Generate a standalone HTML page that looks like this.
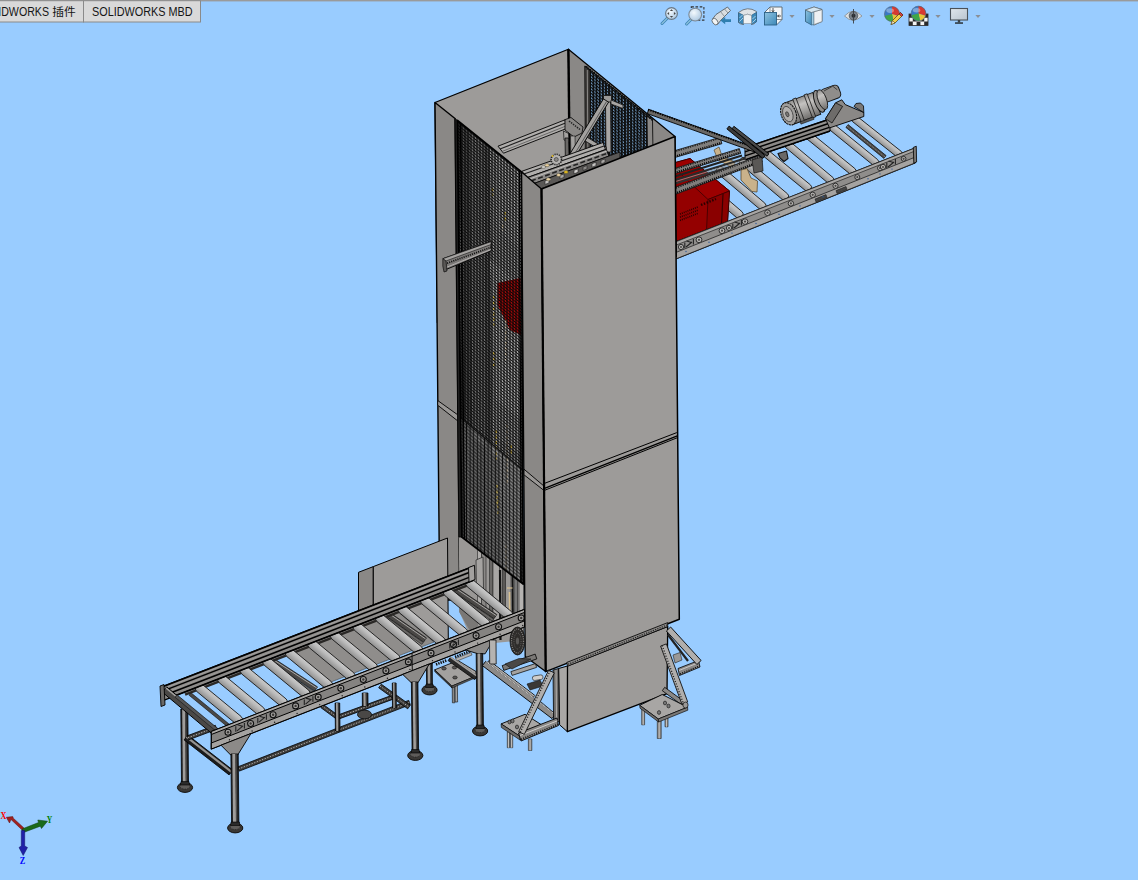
<!DOCTYPE html>
<html><head><meta charset="utf-8"><title>SOLIDWORKS</title>
<style>html,body{margin:0;padding:0;background:#99ccff;overflow:hidden}
svg{display:block}
text{font-family:"Liberation Sans","Noto Sans CJK SC",sans-serif}
text.ser{font-family:"Liberation Serif",serif}
</style></head><body>
<svg width="1138" height="880" viewBox="0 0 1138 880">
<defs>
<linearGradient id="rg" x1="0" y1="0" x2="0" y2="1">
<stop offset="0" stop-color="#c9c9c9"/><stop offset="0.35" stop-color="#bdbdbd"/><stop offset="1" stop-color="#8f8f8f"/>
</linearGradient>
<pattern id="mesh" width="3" height="2.95" patternUnits="userSpaceOnUse" patternTransform="translate(457.5,120.5) skewY(39)">
<path d="M0 1.48H3M1.5 0V2.95" stroke="#050505" stroke-width="1.08" opacity="0.95"/>
</pattern>
<pattern id="mesh2" width="3.6" height="3.4" patternUnits="userSpaceOnUse" patternTransform="translate(457.5,120.5) skewY(39)">
<path d="M0 1.7H3.6M1.8 0V3.4" stroke="#050505" stroke-width="1.0" opacity="0.95"/>
</pattern>
<pattern id="meshb" width="3.15" height="3.0" patternUnits="userSpaceOnUse" patternTransform="translate(585.5,66.3) skewY(39)">
<rect width="3.15" height="3.0" fill="#8ec2f4"/>
<path d="M0 1.5H3.15M1.57 0V3" stroke="#0c0c0c" stroke-width="1.75"/>
</pattern>
<linearGradient id="mg" x1="0" y1="0" x2="0" y2="1">
<stop offset="0" stop-color="#8f8d8b"/><stop offset="0.3" stop-color="#c4c2c0"/><stop offset="0.6" stop-color="#a3a19f"/><stop offset="1" stop-color="#6f6d6b"/>
</linearGradient>
</defs>
<rect x="0" y="0" width="1138" height="880" fill="#99ccff"/>
<g transform="translate(852.5,117.1) rotate(38.48)"><rect x="0" y="-3.50" width="62.3" height="7.00" rx="2.8" fill="url(#rg)" stroke="#1a1a1a" stroke-width="0.85"/></g>
<g transform="translate(829.8,125.3) rotate(39.12)"><rect x="0" y="-3.57" width="61.5" height="7.15" rx="2.9" fill="url(#rg)" stroke="#1a1a1a" stroke-width="0.85"/></g>
<g transform="translate(807.1,134.4) rotate(39.12)"><rect x="0" y="-3.65" width="61.5" height="7.29" rx="2.9" fill="url(#rg)" stroke="#1a1a1a" stroke-width="0.85"/></g>
<g transform="translate(785.3,142.5) rotate(39.91)"><rect x="0" y="-3.72" width="62.2" height="7.43" rx="3.0" fill="url(#rg)" stroke="#1a1a1a" stroke-width="0.85"/></g>
<g transform="translate(762.8,150.7) rotate(39.35)"><rect x="0" y="-3.79" width="61.4" height="7.58" rx="3.0" fill="url(#rg)" stroke="#1a1a1a" stroke-width="0.85"/></g>
<g transform="translate(740.4,159.1) rotate(40.17)"><rect x="0" y="-3.86" width="61.5" height="7.72" rx="3.1" fill="url(#rg)" stroke="#1a1a1a" stroke-width="0.85"/></g>
<g transform="translate(717.4,168.1) rotate(40.28)"><rect x="0" y="-3.93" width="61.9" height="7.87" rx="3.1" fill="url(#rg)" stroke="#1a1a1a" stroke-width="0.85"/></g>
<g transform="translate(695.4,177.1) rotate(40.54)"><rect x="0" y="-4.01" width="61.0" height="8.01" rx="3.2" fill="url(#rg)" stroke="#1a1a1a" stroke-width="0.85"/></g>
<g transform="translate(673.6,186.1) rotate(41.30)"><rect x="0" y="-4.08" width="60.1" height="8.16" rx="3.3" fill="url(#rg)" stroke="#1a1a1a" stroke-width="0.85"/></g>
<polygon points="845.9,127.4 883.9,158.4 886.1,155.6 848.1,124.6" fill="#4a4846" stroke="#111" stroke-width="0.7" stroke-linejoin="round" />
<line x1="847.0" y1="126.0" x2="885.0" y2="157.0" stroke="#9a9896" stroke-width="0.9" stroke-dasharray="1 1"/>
<polygon points="745.0,147.6 830.0,118.8 830.0,131.2 745.0,160.0" fill="#8a8886" stroke="#000" stroke-width="1.0" stroke-linejoin="round" />
<line x1="745.0" y1="147.8" x2="830.0" y2="119.0" stroke="#000" stroke-width="1.4" />
<line x1="745.0" y1="151.8" x2="830.0" y2="123.0" stroke="#000" stroke-width="1.4" />
<line x1="745.0" y1="155.9" x2="830.0" y2="127.1" stroke="#000" stroke-width="1.4" />
<line x1="745.0" y1="159.8" x2="830.0" y2="131.0" stroke="#000" stroke-width="1.4" />
<line x1="745.0" y1="149.8" x2="830.0" y2="121.0" stroke="#9c9a98" stroke-width="0.8" />
<polygon points="825.5,118.7 835.6,102.8 841.8,99.8 845.3,104.6 863.8,112.5 863.8,116.5 829.5,127.9" fill="#8a8886" stroke="#000" stroke-width="0.9" stroke-linejoin="round" />
<polygon points="825.5,118.7 835.6,102.8 842.6,106.4 832.0,123.0" fill="#6e6c6a" stroke="#000" stroke-width="0.7" stroke-linejoin="round" />
<polygon points="854.0,106.5 856.0,103.5 860.5,103.0 863.5,106.0 863.8,112.5" fill="#7a7876" stroke="#000" stroke-width="0.8" stroke-linejoin="round" />
<g transform="translate(788.6,113.8) rotate(-20.4)"><rect x="37" y="-11" width="19" height="13.5" rx="4" fill="#8f8d8b" stroke="#111" stroke-width="0.9"/><path d="M41 -9l10 -1.500l3 5" fill="none" stroke="#333" stroke-width="0.8"/><rect x="0" y="-11.6" width="30" height="23.2" fill="url(#mg)" stroke="#111" stroke-width="0.9"/><rect x="9" y="-12.3" width="3.4" height="24.6" fill="url(#mg)" stroke="#111" stroke-width="0.7"/><rect x="21" y="-12.3" width="3.4" height="24.6" fill="url(#mg)" stroke="#111" stroke-width="0.7"/><ellipse cx="33" cy="-1" rx="4.5" ry="11.5" fill="#8f8d8b" stroke="#111" stroke-width="0.9"/><ellipse cx="36.5" cy="-1.5" rx="4.2" ry="10.5" fill="url(#mg)" stroke="#111" stroke-width="0.8"/><ellipse cx="0" cy="0" rx="7.4" ry="11.6" fill="#9f9d9b" stroke="#111" stroke-width="1.1" stroke-dasharray="2.2 0.6"/><ellipse cx="-0.8" cy="0" rx="4.8" ry="8" fill="#b2b0ae" stroke="#333" stroke-width="0.7"/><ellipse cx="-1.4" cy="0" rx="1.5" ry="2.6" fill="#7a7876" stroke="#222" stroke-width="0.6"/><rect x="8" y="11.6" width="14" height="2.4" fill="#5a5856" stroke="#111" stroke-width="0.5"/></g>
<polygon points="670.0,164.0 690.0,158.5 729.5,191.0 727.5,222.0 670.0,245.0" fill="#940000" stroke="#3a0000" stroke-width="1" stroke-linejoin="round" />
<polygon points="670.0,164.0 690.0,158.5 729.5,191.0 708.0,199.5" fill="#9c0000" stroke="#3a0000" stroke-width="0.8" stroke-linejoin="round" />
<polygon points="708.0,199.5 729.5,191.0 727.5,222.0 706.5,230.5" fill="#8a0000" stroke="#3a0000" stroke-width="0.8" stroke-linejoin="round" />
<line x1="723.0" y1="194.0" x2="721.5" y2="224.0" stroke="#3a0000" stroke-width="1.2" />
<line x1="680.0" y1="214.0" x2="698.0" y2="207.0" stroke="#2a0000" stroke-width="1.6" stroke-dasharray="1 1"/>
<line x1="680.0" y1="217.2" x2="698.0" y2="210.2" stroke="#2a0000" stroke-width="1.6" stroke-dasharray="1 1"/>
<line x1="680.0" y1="220.4" x2="698.0" y2="213.4" stroke="#2a0000" stroke-width="1.6" stroke-dasharray="1 1"/>
<line x1="701.0" y1="205.0" x2="716.0" y2="199.0" stroke="#2a0000" stroke-width="2.4" stroke-dasharray="1.5 1.5"/>
<polygon points="670.9,158.7 721.9,143.7 720.1,137.3 669.1,152.3" fill="#807e7c" stroke="#111" stroke-width="0.8" stroke-linejoin="round" />
<line x1="670.6" y1="157.7" x2="721.6" y2="142.7" stroke="#0a0a0a" stroke-width="2.0" stroke-dasharray="1.1 1.1"/>
<line x1="669.3" y1="153.2" x2="720.3" y2="138.2" stroke="#1a1a1a" stroke-width="1.4" stroke-dasharray="1.1 1.3"/>
<polygon points="714.0,150.0 719.0,147.0 722.0,156.0 735.0,162.0 733.0,168.0 718.0,160.0" fill="#c9b28b" stroke="#5a4a30" stroke-width="0.7" stroke-linejoin="round" />
<polygon points="670.7,174.9 740.7,153.4 739.3,148.6 669.3,170.1" fill="#807e7c" stroke="#111" stroke-width="0.8" stroke-linejoin="round" />
<line x1="670.4" y1="173.9" x2="740.4" y2="152.4" stroke="#0a0a0a" stroke-width="2.0" stroke-dasharray="1.1 1.1"/>
<line x1="669.5" y1="171.0" x2="739.5" y2="149.5" stroke="#1a1a1a" stroke-width="1.4" stroke-dasharray="1.1 1.3"/>
<line x1="670.0" y1="178.0" x2="742.0" y2="155.5" stroke="#222" stroke-width="2.0" />
<line x1="670.0" y1="181.5" x2="745.0" y2="158.5" stroke="#2a2a2a" stroke-width="2.2" />
<line x1="670.0" y1="185.0" x2="748.0" y2="161.5" stroke="#333" stroke-width="2.0" />
<line x1="670.0" y1="183.2" x2="746.0" y2="160.0" stroke="#999" stroke-width="0.8" />
<polygon points="671.2,195.9 762.2,161.8 759.8,155.6 668.8,189.7" fill="#807e7c" stroke="#111" stroke-width="0.8" stroke-linejoin="round" />
<line x1="670.8" y1="195.0" x2="761.8" y2="160.9" stroke="#0a0a0a" stroke-width="2.0" stroke-dasharray="1.1 1.1"/>
<line x1="669.2" y1="190.6" x2="760.2" y2="156.5" stroke="#1a1a1a" stroke-width="1.4" stroke-dasharray="1.1 1.3"/>
<polygon points="741.0,170.0 747.0,168.5 751.0,178.0 757.5,181.0 757.0,192.0 752.0,191.5 741.0,180.0" fill="#c9b28b" stroke="#5a4a30" stroke-width="0.8" stroke-linejoin="round" />
<polygon points="752.0,160.0 762.0,157.0 763.0,171.0 754.0,173.0" fill="#5a5856" stroke="#111" stroke-width="0.7" stroke-linejoin="round" />
<polygon points="778.0,153.5 786.5,151.0 788.0,158.5 784.0,161.5 780.0,158.0" fill="#6a6866" stroke="#111" stroke-width="1.1" stroke-linejoin="round" />
<polygon points="647.3,113.6 763.3,155.1 764.7,150.9 648.7,109.4" fill="#6a6866" stroke="#000" stroke-width="0.9" stroke-linejoin="round" />
<line x1="648.0" y1="109.6" x2="764.0" y2="151.0" stroke="#000" stroke-width="1.8" stroke-dasharray="1.3 1.2"/>
<polygon points="726.9,128.9 762.9,158.4 765.1,155.6 729.1,126.1" fill="#3a3a3a" stroke="#000" stroke-width="0.9" stroke-linejoin="round" />
<polygon points="732.1,128.7 767.1,156.2 768.9,153.8 733.9,126.3" fill="#4a4a4a" stroke="#000" stroke-width="0.9" stroke-linejoin="round" />
<polygon points="670.0,244.1 915.0,148.0 915.0,162.9 670.0,261.3" fill="#8f8d8b" stroke="#000" stroke-width="1.1" stroke-linejoin="round" />
<polygon points="670.0,244.1 915.0,148.0 915.0,151.0 670.0,247.5" fill="#a9a7a5" stroke="#222" stroke-width="0.7" stroke-linejoin="round" />
<polygon points="670.0,254.8 915.0,157.2 915.0,162.9 670.0,261.3" fill="#a5a3a1" stroke="#222" stroke-width="0.8" stroke-linejoin="round" />
<polygon points="913.3,147.4 916.3,146.2 916.6,162.0 913.8,163.2" fill="#7a7876" stroke="#000" stroke-width="0.8" stroke-linejoin="round" />
<circle cx="699.0" cy="239.8" r="2.9" fill="#b5b3b1" stroke="#222" stroke-width="0.9"/><circle cx="699.0" cy="239.8" r="1.1" fill="#4a4846"/>
<circle cx="722.0" cy="230.7" r="2.9" fill="#b5b3b1" stroke="#222" stroke-width="0.9"/><circle cx="722.0" cy="230.7" r="1.1" fill="#4a4846"/>
<circle cx="745.0" cy="221.6" r="2.8" fill="#b5b3b1" stroke="#222" stroke-width="0.9"/><circle cx="745.0" cy="221.6" r="1.1" fill="#4a4846"/>
<circle cx="767.5" cy="212.7" r="2.8" fill="#b5b3b1" stroke="#222" stroke-width="0.9"/><circle cx="767.5" cy="212.7" r="1.1" fill="#4a4846"/>
<circle cx="790.9" cy="203.4" r="2.7" fill="#b5b3b1" stroke="#222" stroke-width="0.9"/><circle cx="790.9" cy="203.4" r="1.1" fill="#4a4846"/>
<circle cx="812.7" cy="194.8" r="2.7" fill="#b5b3b1" stroke="#222" stroke-width="0.9"/><circle cx="812.7" cy="194.8" r="1.1" fill="#4a4846"/>
<circle cx="835.5" cy="185.8" r="2.6" fill="#b5b3b1" stroke="#222" stroke-width="0.9"/><circle cx="835.5" cy="185.8" r="1.1" fill="#4a4846"/>
<circle cx="857.3" cy="177.1" r="2.5" fill="#b5b3b1" stroke="#222" stroke-width="0.9"/><circle cx="857.3" cy="177.1" r="1.1" fill="#4a4846"/>
<circle cx="880.0" cy="168.1" r="2.5" fill="#b5b3b1" stroke="#222" stroke-width="0.9"/><circle cx="880.0" cy="168.1" r="1.1" fill="#4a4846"/>
<circle cx="903.6" cy="158.8" r="2.4" fill="#b5b3b1" stroke="#222" stroke-width="0.9"/><circle cx="903.6" cy="158.8" r="1.1" fill="#4a4846"/>
<path d="M686.0 247.0l6 -5M686.5 241.0l5 1.5M684.8 248.0v-5.5M693.4 244.6v-5.5" stroke="#222" stroke-width="1.1" fill="none"/>
<circle cx="681.0" cy="247.0" r="2.6" fill="#b5b3b1" stroke="#222" stroke-width="0.9"/><circle cx="681.0" cy="247.0" r="1" fill="#4a4846"/>
<path d="M734.0 228.0l6 -5M734.5 222.0l5 1.5M732.8 229.0v-5.5M741.4 225.6v-5.5" stroke="#222" stroke-width="1.1" fill="none"/>
<circle cx="729.0" cy="227.9" r="2.6" fill="#b5b3b1" stroke="#222" stroke-width="0.9"/><circle cx="729.0" cy="227.9" r="1" fill="#4a4846"/>
<path d="M888.0 167.0l6 -5M888.5 161.0l5 1.5M886.8 168.0v-5.5M895.4 164.6v-5.5" stroke="#222" stroke-width="1.1" fill="none"/>
<circle cx="883.0" cy="166.9" r="2.6" fill="#b5b3b1" stroke="#222" stroke-width="0.9"/><circle cx="883.0" cy="166.9" r="1" fill="#4a4846"/>
<polygon points="815.0,199.0 826.0,194.6 827.0,197.5 816.0,202.0" fill="#444" stroke="#111" stroke-width="0.5" stroke-linejoin="round" />
<polygon points="836.0,190.5 846.0,186.5 847.0,189.5 837.0,193.5" fill="#444" stroke="#111" stroke-width="0.5" stroke-linejoin="round" />
<circle cx="686.0" cy="251.5" r="0.7" fill="#2d5a9a"/>
<circle cx="709.0" cy="242.3" r="0.7" fill="#2d5a9a"/>
<circle cx="732.0" cy="233.1" r="0.7" fill="#2d5a9a"/>
<circle cx="756.0" cy="223.5" r="0.7" fill="#2d5a9a"/>
<circle cx="779.0" cy="214.3" r="0.7" fill="#2d5a9a"/>
<circle cx="800.0" cy="205.9" r="0.7" fill="#2d5a9a"/>
<circle cx="823.0" cy="196.7" r="0.7" fill="#2d5a9a"/>
<circle cx="868.0" cy="178.7" r="0.7" fill="#2d5a9a"/>
<circle cx="880.0" cy="173.9" r="0.7" fill="#2d5a9a"/>
<circle cx="892.0" cy="169.1" r="0.7" fill="#2d5a9a"/>
<polygon points="435.0,102.5 568.4,49.2 570.7,269.2 437.3,322.5" fill="#9d9b99" stroke="#000" stroke-width="1.2" stroke-linejoin="round" />
<polygon points="568.4,49.2 675.0,136.5 676.3,256.5 570.7,269.2" fill="#8a8886" stroke="#000" stroke-width="1.2" stroke-linejoin="round" />
<line x1="568.4" y1="49.2" x2="569.6" y2="159.2" stroke="#000" stroke-width="2.4" />
<polygon points="585.5,66.3 652.2,119.5 652.8,179.5 586.7,176.3" fill="url(#meshb)" stroke="#000" stroke-width="1" stroke-linejoin="round" />
<polygon points="584.6,66.0 590.0,70.3 590.8,175.0 585.4,175.0" fill="#3a3836" stroke="#000" stroke-width="0.6" stroke-linejoin="round" />
<line x1="587.3" y1="70.0" x2="588.0" y2="170.0" stroke="#8a8886" stroke-width="1" />
<polygon points="647.0,116.0 652.5,120.0 653.0,150.0 647.5,150.0" fill="#8a8886" stroke="#000" stroke-width="0.7" stroke-linejoin="round" />
<line x1="586.0" y1="66.5" x2="652.5" y2="119.8" stroke="#111" stroke-width="2.2" stroke-dasharray="1.4 1"/>
<polygon points="605.5,101.0 610.5,101.0 611.0,152.0 606.0,152.0" fill="#a8a6a4" stroke="#111" stroke-width="0.8" stroke-linejoin="round" />
<polygon points="603.5,95.5 611.5,95.5 611.5,102.0 603.5,102.0" fill="#9a9896" stroke="#111" stroke-width="0.8" stroke-linejoin="round" />
<polygon points="611.0,100.0 623.0,105.0 623.0,108.5 611.0,104.0" fill="#a8a6a4" stroke="#111" stroke-width="0.7" stroke-linejoin="round" />
<line x1="596.0" y1="110.0" x2="596.6" y2="160.0" stroke="#222" stroke-width="1.6" />
<line x1="628.0" y1="125.0" x2="628.4" y2="150.0" stroke="#222" stroke-width="1.4" />
<line x1="640.0" y1="135.0" x2="640.3" y2="150.0" stroke="#222" stroke-width="1.2" />
<polygon points="498.0,146.2 565.0,119.8 566.5,128.5 503.5,153.2" fill="#b0aeac" stroke="#000" stroke-width="0.9" stroke-linejoin="round" />
<line x1="500.0" y1="149.0" x2="565.5" y2="123.0" stroke="#222" stroke-width="1.2" />
<line x1="502.0" y1="151.5" x2="566.0" y2="126.0" stroke="#555" stroke-width="0.8" />
<polygon points="565.0,119.6 571.0,117.5 583.0,127.0 582.0,133.0 574.0,137.0 565.0,130.0" fill="#8a8886" stroke="#000" stroke-width="0.8" stroke-linejoin="round" />
<line x1="569.0" y1="121.0" x2="580.0" y2="129.5" stroke="#222" stroke-width="1.5" stroke-dasharray="1.5 1"/>
<polygon points="563.5,131.0 568.5,133.5 569.0,142.0 564.0,140.0" fill="#a5a3a1" stroke="#111" stroke-width="0.7" stroke-linejoin="round" />
<polygon points="565.0,138.0 568.6,138.0 569.2,166.0 565.5,166.0" fill="#6a6866" stroke="#000" stroke-width="0.7" stroke-linejoin="round" />
<polygon points="570.5,136.0 575.0,136.0 575.5,160.0 571.0,160.0" fill="#a5a3a1" stroke="#111" stroke-width="0.6" stroke-linejoin="round" />
<polygon points="584.9,140.8 602.9,151.8 605.1,148.2 587.1,137.2" fill="#a5a3a1" stroke="#111" stroke-width="0.8" stroke-linejoin="round" />
<polygon points="603.4,98.9 566.9,158.9 572.1,162.1 608.6,102.1" fill="#a3a19f" stroke="#000" stroke-width="0.9" stroke-linejoin="round" />
<line x1="606.6" y1="101.5" x2="570.2" y2="161.3" stroke="#444" stroke-width="0.8" />
<polygon points="578.0,157.0 606.0,146.5 607.0,152.0 580.0,162.5" fill="#a5a3a1" stroke="#000" stroke-width="0.8" stroke-linejoin="round" />
<line x1="579.0" y1="159.5" x2="606.5" y2="149.0" stroke="#333" stroke-width="0.9" />
<polygon points="521.8,171.3 603.0,142.5 605.5,149.5 527.5,177.5" fill="#b0aeac" stroke="#000" stroke-width="0.9" stroke-linejoin="round" />
<line x1="524.0" y1="174.0" x2="604.0" y2="146.0" stroke="#222" stroke-width="1.3" />
<polygon points="527.5,177.5 606.0,149.5 609.0,156.0 534.0,183.5" fill="#8a8886" stroke="#000" stroke-width="0.9" stroke-linejoin="round" />
<line x1="531.0" y1="181.0" x2="608.0" y2="153.0" stroke="#222" stroke-width="1.6" stroke-dasharray="5 2.5"/>
<line x1="529.5" y1="179.0" x2="607.0" y2="151.0" stroke="#c8c6c4" stroke-width="0.9" />
<polygon points="534.0,183.5 620.0,152.0 620.0,159.0 540.3,189.1" fill="#5a5856" stroke="#000" stroke-width="0.7" stroke-linejoin="round" />
<polygon points="545.0,180.9 549.0,179.4 549.0,182.9 545.0,184.4" fill="#c4c2c0" stroke="#222" stroke-width="0.6" stroke-linejoin="round" />
<polygon points="560.0,175.4 564.0,173.9 564.0,177.4 560.0,178.9" fill="#a8a6a4" stroke="#222" stroke-width="0.6" stroke-linejoin="round" />
<polygon points="574.0,170.3 578.0,168.8 578.0,172.3 574.0,173.8" fill="#d0cecc" stroke="#222" stroke-width="0.6" stroke-linejoin="round" />
<polygon points="583.0,167.0 587.0,165.5 587.0,169.0 583.0,170.5" fill="#8a8886" stroke="#222" stroke-width="0.6" stroke-linejoin="round" />
<polygon points="592.0,163.7 596.0,162.2 596.0,165.7 592.0,167.2" fill="#c4c2c0" stroke="#222" stroke-width="0.6" stroke-linejoin="round" />
<polygon points="601.0,160.4 605.0,158.9 605.0,162.4 601.0,163.9" fill="#a8a6a4" stroke="#222" stroke-width="0.6" stroke-linejoin="round" />
<circle cx="556.3" cy="159.5" r="5.2" fill="#b5b3b1" stroke="#222" stroke-width="1.6" stroke-dasharray="1.2 1"/>
<circle cx="556.3" cy="159.5" r="2" fill="#8a8886" stroke="#333" stroke-width="0.6"/>
<circle cx="552.5" cy="156" r="1" fill="#e0b820"/>
<ellipse cx="547.0" cy="165.3" rx="2.2" ry="1.5" fill="#e8cfa0" stroke="#443" stroke-width="0.4"/>
<ellipse cx="558.7" cy="175.0" rx="2.2" ry="1.5" fill="#e8cfa0" stroke="#443" stroke-width="0.4"/>
<ellipse cx="548.3" cy="179.3" rx="2.2" ry="1.5" fill="#e8cfa0" stroke="#443" stroke-width="0.4"/>
<ellipse cx="566.0" cy="172.0" rx="2.2" ry="1.5" fill="#e0b820" stroke="#443" stroke-width="0.4"/>
<ellipse cx="543.5" cy="167.0" rx="2.2" ry="1.5" fill="#c8c6c4" stroke="#443" stroke-width="0.4"/>
<polygon points="435.0,102.5 455.0,118.5 459.6,600.0 439.7,600.0" fill="#8a8886" stroke="#000" stroke-width="1.4" stroke-linejoin="round" />
<polygon points="437.7,400.5 457.7,414.8 457.7,420.9 437.7,405.2" fill="#9a9896" stroke="#000" stroke-width="0.9" stroke-linejoin="round" />
<polygon points="458.5,500.0 523.0,520.0 524.5,640.0 474.0,645.0 459.5,612.0" fill="#9a9896" stroke="none" stroke-width="0" stroke-linejoin="round" />
<polygon points="459.0,596.0 478.0,610.0 478.0,645.0 459.2,612.0" fill="#7a7876" stroke="none" stroke-width="0" stroke-linejoin="round" />
<polygon points="477.5,540.0 481.5,543.2 481.5,612.0 477.5,612.0" fill="#b0aeac" stroke="#222" stroke-width="0.6" stroke-linejoin="round" />
<polygon points="481.5,540.0 486.0,543.6 486.0,612.0 481.5,612.0" fill="#8a8886" stroke="#222" stroke-width="0.6" stroke-linejoin="round" />
<polygon points="489.5,552.0 493.0,554.8 493.0,620.0 489.5,620.0" fill="#6a6866" stroke="#222" stroke-width="0.6" stroke-linejoin="round" />
<polygon points="493.0,556.0 499.5,561.2 499.5,625.0 493.0,625.0" fill="#a8a6a4" stroke="#222" stroke-width="0.6" stroke-linejoin="round" />
<polygon points="502.5,562.0 505.5,564.4 505.5,630.0 502.5,630.0" fill="#5a5856" stroke="#222" stroke-width="0.6" stroke-linejoin="round" />
<polygon points="505.5,566.0 511.0,570.4 511.0,632.0 505.5,632.0" fill="#9a9896" stroke="#222" stroke-width="0.6" stroke-linejoin="round" />
<polygon points="514.0,572.0 517.5,574.8 517.5,636.0 514.0,636.0" fill="#777" stroke="#222" stroke-width="0.6" stroke-linejoin="round" />
<polygon points="519.0,578.0 523.5,581.6 523.5,640.0 519.0,640.0" fill="#b5b3b1" stroke="#222" stroke-width="0.6" stroke-linejoin="round" />
<polygon points="476.0,560.0 483.0,557.0 483.5,590.0 476.5,592.0" fill="#a5a3a1" stroke="#222" stroke-width="0.7" stroke-linejoin="round" />
<line x1="500.0" y1="570.0" x2="500.5" y2="640.0" stroke="#111" stroke-width="2.2" />
<line x1="512.5" y1="575.0" x2="513.0" y2="640.0" stroke="#111" stroke-width="1.8" />
<line x1="509.5" y1="592.0" x2="510.0" y2="632.0" stroke="#d8c090" stroke-width="1.6" />
<line x1="507.0" y1="588.0" x2="512.5" y2="588.0" stroke="#d8c090" stroke-width="1.2" />
<line x1="503.5" y1="612.0" x2="505.0" y2="628.0" stroke="#c8a020" stroke-width="1.4" />
<circle cx="517" cy="629" r="1.8" fill="#e8d0a8" stroke="#654" stroke-width="0.4"/>
<polygon points="455.0,118.5 458.0,121.0 461.8,537.0 458.9,537.0" fill="#222" stroke="#000" stroke-width="0.8" stroke-linejoin="round" />
<clipPath id="mclip"><polygon points="457.5,120.5 521.5,172.0 523.2,584.0 461.8,537.0"/></clipPath>
<g clip-path="url(#mclip)">
<polygon points="457.5,120.5 521.5,172.0 523.2,584.0 461.8,537.0" fill="#8e8e8e" stroke="none" stroke-width="0" stroke-linejoin="round" />
<polygon points="458.0,120.0 470.0,130.0 474.0,560.0 461.0,540.0" fill="#4a4a4a" stroke="none" stroke-width="0" stroke-linejoin="round" />
<polygon points="470.0,130.0 484.0,141.0 487.0,560.0 474.0,550.0" fill="#6c6c6c" stroke="none" stroke-width="0" stroke-linejoin="round" />
<polygon points="484.0,141.0 490.0,146.0 493.0,575.0 487.0,570.0" fill="#555" stroke="none" stroke-width="0" stroke-linejoin="round" />
<polygon points="490.0,260.0 521.5,285.0 522.0,420.0 496.0,400.0" fill="#a2a2a2" stroke="none" stroke-width="0" stroke-linejoin="round" />
<polygon points="497.0,146.0 521.5,172.0 521.5,250.0 497.0,228.0" fill="#9a9a9a" stroke="none" stroke-width="0" stroke-linejoin="round" />
<polygon points="476.0,440.0 500.0,460.0 502.0,575.0 478.0,558.0" fill="#5a5a5a" stroke="none" stroke-width="0" stroke-linejoin="round" />
<polygon points="500.0,440.0 522.0,455.0 523.0,585.0 502.0,570.0" fill="#7c7c7c" stroke="none" stroke-width="0" stroke-linejoin="round" />
<polygon points="462.0,430.0 486.0,448.0 489.0,560.0 462.5,538.0" fill="#505050" stroke="none" stroke-width="0" stroke-linejoin="round" />
<polygon points="497.5,283.0 520.5,278.0 521.0,335.0 510.0,330.0 497.5,305.0" fill="#9a0a0a" stroke="none" stroke-width="0" stroke-linejoin="round" />
<line x1="492.5" y1="188.0" x2="492.6" y2="196.0" stroke="#d8b020" stroke-width="1.3" stroke-dasharray="3 2.5"/>
<line x1="505.0" y1="212.0" x2="505.1" y2="222.0" stroke="#d8b020" stroke-width="1.3" stroke-dasharray="3 2.5"/>
<line x1="503.0" y1="225.0" x2="503.1" y2="231.0" stroke="#e0c8a0" stroke-width="1.3" stroke-dasharray="3 2.5"/>
<line x1="494.0" y1="296.0" x2="494.1" y2="326.0" stroke="#d8b020" stroke-width="1.3" stroke-dasharray="3 2.5"/>
<line x1="506.0" y1="320.0" x2="506.1" y2="360.0" stroke="#e0c8a0" stroke-width="1.3" stroke-dasharray="3 2.5"/>
<line x1="494.0" y1="352.0" x2="494.1" y2="366.0" stroke="#d8b020" stroke-width="1.3" stroke-dasharray="3 2.5"/>
<line x1="496.0" y1="430.0" x2="496.1" y2="460.0" stroke="#d8b020" stroke-width="1.3" stroke-dasharray="3 2.5"/>
<line x1="507.0" y1="425.0" x2="507.1" y2="485.0" stroke="#e0c8a0" stroke-width="1.3" stroke-dasharray="3 2.5"/>
<line x1="497.0" y1="485.0" x2="497.1" y2="505.0" stroke="#d8b020" stroke-width="1.3" stroke-dasharray="3 2.5"/>
<line x1="511.0" y1="445.0" x2="511.1" y2="455.0" stroke="#d8b020" stroke-width="1.3" stroke-dasharray="3 2.5"/>
<line x1="506.0" y1="545.0" x2="506.1" y2="575.0" stroke="#e0c8a0" stroke-width="1.3" stroke-dasharray="3 2.5"/>
<line x1="498.0" y1="500.0" x2="498.1" y2="516.0" stroke="#d8b020" stroke-width="1.3" stroke-dasharray="3 2.5"/>
<polygon points="457.5,120.5 521.5,172.0 522.6,470.0 461.0,418.0" fill="url(#mesh)" stroke="none" stroke-width="0" stroke-linejoin="round" />
<polygon points="461.0,418.0 522.6,470.0 523.2,584.0 461.8,537.0" fill="#8a8a8a" stroke="none" stroke-width="0" stroke-linejoin="round" opacity="0.35"/>
<polygon points="461.0,418.0 522.6,470.0 523.2,584.0 461.8,537.0" fill="url(#mesh2)" stroke="none" stroke-width="0" stroke-linejoin="round" />
<line x1="461.0" y1="418.0" x2="522.6" y2="470.0" stroke="#111" stroke-width="1.2" />
</g>
<polygon points="457.5,120.5 521.5,172.0 523.2,584.0 461.8,537.0" fill="none" stroke="#000" stroke-width="1.8" stroke-linejoin="round" />
<line x1="460.5" y1="123.0" x2="464.5" y2="539.0" stroke="#000" stroke-width="1.4" />
<line x1="519.5" y1="171.0" x2="521.3" y2="582.0" stroke="#000" stroke-width="1.2" />
<polygon points="443.4,258.5 491.0,241.7 491.0,250.9 446.3,269.4" fill="#7c7a78" stroke="#000" stroke-width="0.9" stroke-linejoin="round" />
<polygon points="443.4,258.5 491.0,241.7 491.0,244.5 444.5,261.5" fill="#a5a3a1" stroke="#111" stroke-width="0.6" stroke-linejoin="round" />
<line x1="445.0" y1="264.0" x2="491.0" y2="247.3" stroke="#111" stroke-width="1.8" stroke-dasharray="1.1 1.1"/>
<line x1="446.0" y1="267.5" x2="491.0" y2="249.5" stroke="#c0bebc" stroke-width="0.8" />
<polygon points="442.8,258.5 446.0,261.0 447.0,271.0 444.0,272.0 442.8,266.0" fill="#5a5856" stroke="#000" stroke-width="0.6" stroke-linejoin="round" />
<polygon points="358.5,572.3 373.3,566.6 373.3,640.0 358.5,640.0" fill="#8a8886" stroke="#000" stroke-width="1" stroke-linejoin="round" />
<polygon points="373.3,566.6 447.5,538.0 448.3,640.0 373.3,640.0" fill="#9d9b99" stroke="#000" stroke-width="1" stroke-linejoin="round" />
<polygon points="180.8,709.0 187.8,709.0 188.5,782.5 181.5,782.5" fill="#222" stroke="#000" stroke-width="0.8" stroke-linejoin="round" />
<line x1="183.6" y1="709.0" x2="184.3" y2="782.5" stroke="#9f9d9b" stroke-width="2.8000000000000003" />
<line x1="185.7" y1="709.0" x2="186.4" y2="782.5" stroke="#5a5856" stroke-width="0.84" />
<ellipse cx="185.0" cy="787.5" rx="7.6" ry="4.9" fill="#3a3836" stroke="#111" stroke-width="1"/>
<ellipse cx="185.0" cy="786.3" rx="5" ry="2.8" fill="#5e5c5a" stroke="#1a1a1a" stroke-width="0.6" stroke-dasharray="1.5 1"/>
<polygon points="181.0,781.5 189.0,781.5 189.5,785.0 180.5,785.0" fill="#2a2a2a" stroke="#000" stroke-width="0.6" stroke-linejoin="round" />
<polygon points="426.4,660.0 432.2,660.0 432.4,685.0 426.6,685.0" fill="#222" stroke="#000" stroke-width="0.8" stroke-linejoin="round" />
<line x1="428.7" y1="660.0" x2="429.0" y2="685.0" stroke="#9f9d9b" stroke-width="2.3200000000000047" />
<line x1="430.5" y1="660.0" x2="430.7" y2="685.0" stroke="#5a5856" stroke-width="0.6960000000000013" />
<ellipse cx="429.5" cy="690.0" rx="7.6" ry="4.9" fill="#3a3836" stroke="#111" stroke-width="1"/>
<ellipse cx="429.5" cy="688.8" rx="5" ry="2.8" fill="#5e5c5a" stroke="#1a1a1a" stroke-width="0.6" stroke-dasharray="1.5 1"/>
<polygon points="426.1,684.0 432.9,684.0 433.4,687.5 425.6,687.5" fill="#2a2a2a" stroke="#000" stroke-width="0.6" stroke-linejoin="round" />
<polygon points="184.1,739.9 229.1,774.9 232.9,770.1 187.9,735.1" fill="#1c1c1c" stroke="#000" stroke-width="0.8" stroke-linejoin="round" />
<line x1="186.5" y1="736.8" x2="231.5" y2="771.8" stroke="#959391" stroke-width="2.2" />
<polygon points="188.7,739.8 216.7,729.3 215.3,725.3 187.3,735.8" fill="#3e3c3a" stroke="#000" stroke-width="0.8" stroke-linejoin="round" />
<line x1="188.0" y1="737.8" x2="216.0" y2="727.3" stroke="#b0aeac" stroke-width="1.0" stroke-dasharray="1.3 1.5"/>
<polygon points="239.3,771.1 410.3,704.6 408.7,700.4 237.7,766.9" fill="#3e3c3a" stroke="#000" stroke-width="0.8" stroke-linejoin="round" />
<line x1="238.5" y1="769.0" x2="409.5" y2="702.5" stroke="#b0aeac" stroke-width="1.0" stroke-dasharray="1.3 1.5"/>
<polygon points="337.7,719.4 396.7,697.9 395.3,694.1 336.3,715.6" fill="#3e3c3a" stroke="#000" stroke-width="0.8" stroke-linejoin="round" />
<line x1="337.0" y1="717.5" x2="396.0" y2="696.0" stroke="#b0aeac" stroke-width="1.0" stroke-dasharray="1.3 1.5"/>
<polygon points="320.8,707.6 335.8,718.6 338.2,715.4 323.2,704.4" fill="#3e3c3a" stroke="#000" stroke-width="0.8" stroke-linejoin="round" />
<line x1="322.0" y1="706.0" x2="337.0" y2="717.0" stroke="#b0aeac" stroke-width="1.0" stroke-dasharray="1.3 1.5"/>
<polygon points="378.7,687.8 407.7,708.8 410.3,705.2 381.3,684.2" fill="#3e3c3a" stroke="#000" stroke-width="0.8" stroke-linejoin="round" />
<line x1="380.0" y1="686.0" x2="409.0" y2="707.0" stroke="#b0aeac" stroke-width="1.0" stroke-dasharray="1.3 1.5"/>
<polygon points="335.1,703.0 339.7,703.0 340.0,731.0 335.4,731.0" fill="#222" stroke="#000" stroke-width="0.8" stroke-linejoin="round" />
<line x1="336.9" y1="703.0" x2="337.2" y2="731.0" stroke="#9f9d9b" stroke-width="1.8399999999999865" />
<line x1="338.3" y1="703.0" x2="338.6" y2="731.0" stroke="#5a5856" stroke-width="0.5519999999999959" />
<polygon points="392.3,683.0 396.1,683.0 396.3,708.0 392.5,708.0" fill="#222" stroke="#000" stroke-width="0.8" stroke-linejoin="round" />
<line x1="393.8" y1="683.0" x2="394.1" y2="708.0" stroke="#9f9d9b" stroke-width="1.5200000000000047" />
<line x1="395.0" y1="683.0" x2="395.2" y2="708.0" stroke="#5a5856" stroke-width="0.45600000000000135" />
<polygon points="362.3,693.0 367.9,693.0 368.0,706.0 362.4,706.0" fill="#222" stroke="#000" stroke-width="0.8" stroke-linejoin="round" />
<line x1="364.5" y1="693.0" x2="364.7" y2="706.0" stroke="#9f9d9b" stroke-width="2.2399999999999864" />
<line x1="366.2" y1="693.0" x2="366.3" y2="706.0" stroke="#5a5856" stroke-width="0.6719999999999959" />
<ellipse cx="364.5" cy="714.5" rx="7" ry="4.4" fill="#4a4846" stroke="#111" stroke-width="0.9"/>
<polygon points="287.0,652.3 396.0,610.1 434.0,642.1 325.0,684.3" fill="#8f8d8b" stroke="#444" stroke-width="0.6" stroke-linejoin="round" />
<polygon points="269.7,661.8 314.7,691.1 317.5,686.9 272.5,657.6" fill="#4a4846" stroke="#111" stroke-width="0.7" stroke-linejoin="round" />
<line x1="271.8" y1="658.7" x2="316.8" y2="688.0" stroke="#a8a6a4" stroke-width="1.0" />
<polygon points="268.2,664.2 313.2,693.5 314.5,691.5 269.5,662.2" fill="#6a6866" stroke="#111" stroke-width="0.5" stroke-linejoin="round" />
<polygon points="384.9,615.3 423.6,642.1 426.4,637.9 387.7,611.1" fill="#4a4846" stroke="#111" stroke-width="0.7" stroke-linejoin="round" />
<line x1="387.0" y1="612.2" x2="425.7" y2="639.0" stroke="#a8a6a4" stroke-width="1.0" />
<polygon points="383.2,617.6 421.9,644.4 423.3,642.5 384.6,615.7" fill="#6a6866" stroke="#111" stroke-width="0.5" stroke-linejoin="round" />
<polygon points="450.4,589.4 494.0,618.7 496.8,614.5 453.2,585.2" fill="#4a4846" stroke="#111" stroke-width="0.7" stroke-linejoin="round" />
<line x1="452.5" y1="586.3" x2="496.1" y2="615.6" stroke="#a8a6a4" stroke-width="1.0" />
<polygon points="448.8,591.8 492.4,621.1 493.7,619.1 450.1,589.8" fill="#6a6866" stroke="#111" stroke-width="0.5" stroke-linejoin="round" />
<line x1="185.0" y1="694.3" x2="470.0" y2="584.0" stroke="#2a2826" stroke-width="3.2" />
<line x1="185.0" y1="693.0" x2="470.0" y2="582.7" stroke="#8a8886" stroke-width="0.8" />
<g transform="translate(196.7,685.6) rotate(39.56)"><rect x="0" y="-4.50" width="57.4" height="9.00" rx="3.6" fill="url(#rg)" stroke="#1a1a1a" stroke-width="0.85"/></g>
<g transform="translate(219.2,676.9) rotate(39.56)"><rect x="0" y="-4.50" width="57.4" height="9.00" rx="3.6" fill="url(#rg)" stroke="#1a1a1a" stroke-width="0.85"/></g>
<g transform="translate(241.8,668.2) rotate(39.56)"><rect x="0" y="-4.50" width="57.4" height="9.00" rx="3.6" fill="url(#rg)" stroke="#1a1a1a" stroke-width="0.85"/></g>
<g transform="translate(264.3,659.4) rotate(39.56)"><rect x="0" y="-4.50" width="57.4" height="9.00" rx="3.6" fill="url(#rg)" stroke="#1a1a1a" stroke-width="0.85"/></g>
<g transform="translate(286.8,650.7) rotate(39.56)"><rect x="0" y="-4.50" width="57.4" height="9.00" rx="3.6" fill="url(#rg)" stroke="#1a1a1a" stroke-width="0.85"/></g>
<g transform="translate(309.4,642.0) rotate(39.56)"><rect x="0" y="-4.50" width="57.4" height="9.00" rx="3.6" fill="url(#rg)" stroke="#1a1a1a" stroke-width="0.85"/></g>
<g transform="translate(331.9,633.2) rotate(39.56)"><rect x="0" y="-4.50" width="57.4" height="9.00" rx="3.6" fill="url(#rg)" stroke="#1a1a1a" stroke-width="0.85"/></g>
<g transform="translate(354.5,624.5) rotate(39.56)"><rect x="0" y="-4.50" width="57.4" height="9.00" rx="3.6" fill="url(#rg)" stroke="#1a1a1a" stroke-width="0.85"/></g>
<g transform="translate(377.0,615.8) rotate(39.56)"><rect x="0" y="-4.50" width="57.4" height="9.00" rx="3.6" fill="url(#rg)" stroke="#1a1a1a" stroke-width="0.85"/></g>
<g transform="translate(399.6,607.1) rotate(39.56)"><rect x="0" y="-4.50" width="57.4" height="9.00" rx="3.6" fill="url(#rg)" stroke="#1a1a1a" stroke-width="0.85"/></g>
<g transform="translate(422.1,598.3) rotate(39.56)"><rect x="0" y="-4.50" width="57.4" height="9.00" rx="3.6" fill="url(#rg)" stroke="#1a1a1a" stroke-width="0.85"/></g>
<g transform="translate(444.7,589.6) rotate(39.56)"><rect x="0" y="-4.50" width="57.4" height="9.00" rx="3.6" fill="url(#rg)" stroke="#1a1a1a" stroke-width="0.85"/></g>
<g transform="translate(467.2,580.9) rotate(39.56)"><rect x="0" y="-4.50" width="57.4" height="9.00" rx="3.6" fill="url(#rg)" stroke="#1a1a1a" stroke-width="0.85"/></g>
<polygon points="163.0,686.3 473.6,566.1 473.6,580.4 163.0,700.6" fill="#8c8a88" stroke="#000" stroke-width="1.2" stroke-linejoin="round" />
<line x1="163.3" y1="686.5" x2="473.6" y2="566.4" stroke="#000" stroke-width="1.5" />
<line x1="167.2" y1="689.4" x2="473.6" y2="570.8" stroke="#000" stroke-width="1.5" />
<line x1="171.6" y1="692.5" x2="473.6" y2="575.6" stroke="#000" stroke-width="1.5" />
<line x1="175.6" y1="695.4" x2="473.6" y2="580.1" stroke="#000" stroke-width="1.5" />
<line x1="165.0" y1="687.9" x2="473.6" y2="568.5" stroke="#a5a3a1" stroke-width="0.9" />
<line x1="168.0" y1="691.5" x2="473.6" y2="573.2" stroke="#9f9d9b" stroke-width="0.8" />
<polygon points="468.5,567.6 474.5,565.3 475.0,579.5 469.0,582.0" fill="#a3a19f" stroke="#000" stroke-width="0.9" stroke-linejoin="round" />
<polygon points="162.3,692.1 211.3,733.1 215.7,727.9 166.7,686.9" fill="#4a4846" stroke="#000" stroke-width="1" stroke-linejoin="round" />
<line x1="166.0" y1="688.0" x2="215.0" y2="729.0" stroke="#a5a3a1" stroke-width="1.6" />
<polygon points="175.0,697.2 221.0,735.2 223.0,732.8 177.0,694.8" fill="#555" stroke="#111" stroke-width="0.6" stroke-linejoin="round" />
<polygon points="189.0,695.2 228.0,727.2 230.0,724.8 191.0,692.8" fill="#4a4846" stroke="#111" stroke-width="0.6" stroke-linejoin="round" />
<polygon points="160.0,686.0 164.0,684.5 165.0,705.0 161.0,706.5" fill="#6a6866" stroke="#000" stroke-width="0.9" stroke-linejoin="round" />
<polygon points="211.3,731.5 524.5,609.4 524.5,626.9 211.3,749.0" fill="#858381" stroke="#000" stroke-width="1.3" stroke-linejoin="round" />
<polygon points="211.3,731.5 524.5,609.4 524.5,612.4 211.3,734.5" fill="#a9a7a5" stroke="#000" stroke-width="1.0" stroke-linejoin="round" />
<polygon points="211.3,743.0 524.5,620.9 524.5,626.9 211.3,749.0" fill="#a5a3a1" stroke="#000" stroke-width="1.0" stroke-linejoin="round" />
<circle cx="228.0" cy="732.3" r="3" fill="#9f9d9b" stroke="#111" stroke-width="1.1"/><circle cx="228.0" cy="732.3" r="1.2" fill="#3a3836"/>
<circle cx="229.5" cy="739.8" r="0.7" fill="#1a1a1a"/>
<circle cx="250.6" cy="723.5" r="3" fill="#9f9d9b" stroke="#111" stroke-width="1.1"/><circle cx="250.6" cy="723.5" r="1.2" fill="#3a3836"/>
<circle cx="252.1" cy="731.0" r="0.7" fill="#1a1a1a"/>
<circle cx="273.1" cy="714.7" r="3" fill="#9f9d9b" stroke="#111" stroke-width="1.1"/><circle cx="273.1" cy="714.7" r="1.2" fill="#3a3836"/>
<circle cx="274.6" cy="722.2" r="0.7" fill="#1a1a1a"/>
<circle cx="295.6" cy="705.9" r="3" fill="#9f9d9b" stroke="#111" stroke-width="1.1"/><circle cx="295.6" cy="705.9" r="1.2" fill="#3a3836"/>
<circle cx="297.1" cy="713.4" r="0.7" fill="#1a1a1a"/>
<circle cx="318.2" cy="697.1" r="3" fill="#9f9d9b" stroke="#111" stroke-width="1.1"/><circle cx="318.2" cy="697.1" r="1.2" fill="#3a3836"/>
<circle cx="319.7" cy="704.6" r="0.7" fill="#1a1a1a"/>
<circle cx="340.8" cy="688.3" r="3" fill="#9f9d9b" stroke="#111" stroke-width="1.1"/><circle cx="340.8" cy="688.3" r="1.2" fill="#3a3836"/>
<circle cx="342.2" cy="695.8" r="0.7" fill="#1a1a1a"/>
<circle cx="363.3" cy="679.5" r="3" fill="#9f9d9b" stroke="#111" stroke-width="1.1"/><circle cx="363.3" cy="679.5" r="1.2" fill="#3a3836"/>
<circle cx="364.8" cy="687.0" r="0.7" fill="#1a1a1a"/>
<circle cx="385.9" cy="670.7" r="3" fill="#9f9d9b" stroke="#111" stroke-width="1.1"/><circle cx="385.9" cy="670.7" r="1.2" fill="#3a3836"/>
<circle cx="387.4" cy="678.2" r="0.7" fill="#1a1a1a"/>
<circle cx="408.4" cy="661.9" r="3" fill="#9f9d9b" stroke="#111" stroke-width="1.1"/><circle cx="408.4" cy="661.9" r="1.2" fill="#3a3836"/>
<circle cx="409.9" cy="669.4" r="0.7" fill="#1a1a1a"/>
<circle cx="431.0" cy="653.1" r="3" fill="#9f9d9b" stroke="#111" stroke-width="1.1"/><circle cx="431.0" cy="653.1" r="1.2" fill="#3a3836"/>
<circle cx="432.5" cy="660.6" r="0.7" fill="#1a1a1a"/>
<circle cx="453.5" cy="644.4" r="3" fill="#9f9d9b" stroke="#111" stroke-width="1.1"/><circle cx="453.5" cy="644.4" r="1.2" fill="#3a3836"/>
<circle cx="455.0" cy="651.9" r="0.7" fill="#1a1a1a"/>
<circle cx="476.1" cy="635.6" r="3" fill="#9f9d9b" stroke="#111" stroke-width="1.1"/><circle cx="476.1" cy="635.6" r="1.2" fill="#3a3836"/>
<circle cx="477.6" cy="643.1" r="0.7" fill="#1a1a1a"/>
<circle cx="498.6" cy="626.8" r="3" fill="#9f9d9b" stroke="#111" stroke-width="1.1"/><circle cx="498.6" cy="626.8" r="1.2" fill="#3a3836"/>
<circle cx="500.1" cy="634.3" r="0.7" fill="#1a1a1a"/>
<circle cx="521.2" cy="618.0" r="3" fill="#9f9d9b" stroke="#111" stroke-width="1.1"/><circle cx="521.2" cy="618.0" r="1.2" fill="#3a3836"/>
<circle cx="522.7" cy="625.5" r="0.7" fill="#1a1a1a"/>
<path d="M237.0 730.8l6 -5M237.5 724.8l5 1.5M235.8 731.8v-5.5M244.4 728.4v-5.5" stroke="#222" stroke-width="1.1" fill="none"/>
<path d="M259.0 722.2l6 -5M259.5 716.2l5 1.5M257.8 723.2v-5.5M266.4 719.8v-5.5" stroke="#222" stroke-width="1.1" fill="none"/>
<path d="M305.5 704.1l6 -5M306.0 698.1l5 1.5M304.3 705.1v-5.5M312.9 701.7v-5.5" stroke="#222" stroke-width="1.1" fill="none"/>
<path d="M451.0 647.4l6 -5M451.5 641.4l5 1.5M449.8 648.4v-5.5M458.4 645.0v-5.5" stroke="#222" stroke-width="1.1" fill="none"/>
<line x1="412.0" y1="653.2" x2="412.3" y2="670.7" stroke="#111" stroke-width="1" />
<polygon points="221.0,745.2 251.0,733.5 237.7,755.0 230.7,755.0" fill="#8c8a88" stroke="#000" stroke-width="0.9" stroke-linejoin="round" />
<polygon points="230.9,754.0 238.2,754.0 238.9,823.0 231.6,823.0" fill="#222" stroke="#000" stroke-width="0.8" stroke-linejoin="round" />
<line x1="233.8" y1="754.0" x2="234.5" y2="823.0" stroke="#9f9d9b" stroke-width="2.9199999999999933" />
<line x1="236.0" y1="754.0" x2="236.7" y2="823.0" stroke="#5a5856" stroke-width="0.8759999999999979" />
<ellipse cx="235.2" cy="828.0" rx="7.6" ry="4.9" fill="#3a3836" stroke="#111" stroke-width="1"/>
<ellipse cx="235.2" cy="826.8" rx="5" ry="2.8" fill="#5e5c5a" stroke="#1a1a1a" stroke-width="0.6" stroke-dasharray="1.5 1"/>
<polygon points="231.1,822.0 239.4,822.0 239.9,825.5 230.6,825.5" fill="#2a2a2a" stroke="#000" stroke-width="0.6" stroke-linejoin="round" />
<polygon points="402.7,674.4 429.3,664.0 418.1,682.5 411.1,682.5" fill="#8c8a88" stroke="#000" stroke-width="0.9" stroke-linejoin="round" />
<polygon points="411.4,682.0 417.9,682.0 418.6,750.5 412.1,750.5" fill="#222" stroke="#000" stroke-width="0.8" stroke-linejoin="round" />
<line x1="414.0" y1="682.0" x2="414.7" y2="750.5" stroke="#9f9d9b" stroke-width="2.6" />
<line x1="415.9" y1="682.0" x2="416.6" y2="750.5" stroke="#5a5856" stroke-width="0.78" />
<ellipse cx="415.3" cy="755.5" rx="7.6" ry="4.9" fill="#3a3836" stroke="#111" stroke-width="1"/>
<ellipse cx="415.3" cy="754.3" rx="5" ry="2.8" fill="#5e5c5a" stroke="#1a1a1a" stroke-width="0.6" stroke-dasharray="1.5 1"/>
<polygon points="411.6,749.5 419.1,749.5 419.6,753.0 411.1,753.0" fill="#2a2a2a" stroke="#000" stroke-width="0.6" stroke-linejoin="round" />
<polygon points="452.2,684.0 454.6,684.0 454.8,702.8 452.4,702.8" fill="#8a8886" stroke="#222" stroke-width="0.7" stroke-linejoin="round" />
<polygon points="455.0,684.0 457.4,684.0 457.6,702.0 455.2,702.0" fill="#a5a3a1" stroke="#222" stroke-width="0.7" stroke-linejoin="round" />
<polygon points="434.7,669.8 458.0,660.5 476.0,671.5 476.0,676.0 451.8,686.1" fill="#a3a19f" stroke="#000" stroke-width="0.8" stroke-linejoin="round" />
<polygon points="434.7,669.8 451.8,686.1 452.0,688.0 434.7,671.6" fill="#3a3836" stroke="#000" stroke-width="0.5" stroke-linejoin="round" />
<polygon points="451.8,686.1 476.0,676.0 476.0,677.6 452.0,688.0" fill="#5a5856" stroke="#000" stroke-width="0.5" stroke-linejoin="round" />
<ellipse cx="444.0" cy="668.5" rx="2.2" ry="1.5" fill="#5a5856" stroke="#111" stroke-width="0.6"/>
<ellipse cx="454.5" cy="667.5" rx="2.2" ry="1.5" fill="#5a5856" stroke="#111" stroke-width="0.6"/>
<ellipse cx="455.0" cy="677.5" rx="2.2" ry="1.5" fill="#5a5856" stroke="#111" stroke-width="0.6"/>
<line x1="436.0" y1="664.5" x2="447.0" y2="660.3" stroke="#111" stroke-width="2.6" stroke-dasharray="1.4 1"/>
<line x1="455.0" y1="657.0" x2="470.0" y2="651.3" stroke="#111" stroke-width="2.6" stroke-dasharray="1.4 1"/>
<polygon points="455.5,658.5 471.0,652.5 472.0,655.0 457.0,661.0" fill="#b5b3b1" stroke="#222" stroke-width="0.5" stroke-linejoin="round" />
<polygon points="448.1,660.6 474.7,679.6 477.3,676.0 450.7,657.0" fill="#2a2a2a" stroke="#000" stroke-width="0.8" stroke-linejoin="round" />
<line x1="450.4" y1="657.2" x2="477.0" y2="676.2" stroke="#a5a3a1" stroke-width="1.6" />
<polygon points="485.1,665.5 531.1,700.5 534.9,695.5 488.9,660.5" fill="#8c8a88" stroke="#000" stroke-width="0.9" stroke-linejoin="round" />
<line x1="489.0" y1="661.5" x2="535.0" y2="696.5" stroke="#c0bebc" stroke-width="0.9" />
<polygon points="465.4,649.9 494.0,638.8 485.1,653.8 478.1,653.8" fill="#8c8a88" stroke="#000" stroke-width="0.9" stroke-linejoin="round" />
<polygon points="476.2,653.5 482.7,653.5 483.4,726.0 476.9,726.0" fill="#222" stroke="#000" stroke-width="0.8" stroke-linejoin="round" />
<line x1="478.8" y1="653.5" x2="479.5" y2="726.0" stroke="#9f9d9b" stroke-width="2.6" />
<line x1="480.8" y1="653.5" x2="481.4" y2="726.0" stroke="#5a5856" stroke-width="0.78" />
<ellipse cx="480.1" cy="731.0" rx="7.6" ry="4.9" fill="#3a3836" stroke="#111" stroke-width="1"/>
<ellipse cx="480.1" cy="729.8" rx="5" ry="2.8" fill="#5e5c5a" stroke="#1a1a1a" stroke-width="0.6" stroke-dasharray="1.5 1"/>
<polygon points="476.4,725.0 483.9,725.0 484.4,728.5 475.9,728.5" fill="#2a2a2a" stroke="#000" stroke-width="0.6" stroke-linejoin="round" />
<polygon points="521.6,172.0 541.5,189.0 545.7,671.6 525.2,656.6" fill="#8a8886" stroke="#000" stroke-width="1.3" stroke-linejoin="round" />
<polygon points="524.0,469.2 543.9,486.0 543.9,490.4 524.0,474.8" fill="#9a9896" stroke="#000" stroke-width="0.9" stroke-linejoin="round" />
<polygon points="541.5,189.0 675.0,136.5 679.3,619.3 545.7,671.6" fill="#9d9b99" stroke="#000" stroke-width="1.5" stroke-linejoin="round" />
<line x1="543.9" y1="483.6" x2="676.8" y2="432.6" stroke="#000" stroke-width="1" />
<line x1="543.9" y1="488.6" x2="677.3" y2="435.8" stroke="#000" stroke-width="1.3" />
<line x1="543.9" y1="490.6" x2="677.6" y2="437.6" stroke="#000" stroke-width="1" />
<line x1="541.5" y1="189.0" x2="545.7" y2="671.6" stroke="#000" stroke-width="2.2" />
<polygon points="558.6,668.5 567.5,666.0 567.4,731.7 559.6,724.8" fill="#a9a7a5" stroke="#000" stroke-width="1" stroke-linejoin="round" />
<polygon points="567.5,666.0 667.7,626.5 667.0,693.6 567.4,731.7" fill="#9d9b99" stroke="#000" stroke-width="1.3" stroke-linejoin="round" />
<polygon points="566.8,662.4 667.7,622.6 667.7,626.5 567.5,666.2" fill="#8a8886" stroke="#000" stroke-width="0.8" stroke-linejoin="round" />
<line x1="568.0" y1="664.2" x2="667.7" y2="624.8" stroke="#222" stroke-width="1.2" stroke-dasharray="1.2 1.2"/>
<ellipse cx="517.5" cy="641" rx="7.5" ry="14" fill="#2e2c2a" stroke="#111" stroke-width="0.8"/>
<ellipse cx="517.5" cy="641" rx="6" ry="12" fill="none" stroke="#8a8886" stroke-width="1.2" stroke-dasharray="0.9 1.3"/>
<ellipse cx="517.5" cy="641" rx="3.6" ry="8" fill="none" stroke="#6a6866" stroke-width="1" stroke-dasharray="0.8 1.4"/>
<ellipse cx="517.5" cy="641" rx="1.6" ry="3.6" fill="#5a5856"/>
<polygon points="489.5,640.0 496.0,640.0 496.2,664.0 489.7,664.0" fill="#b5b3b1" stroke="#111" stroke-width="0.8" stroke-linejoin="round" />
<polygon points="503.8,670.4 536.8,658.9 535.2,654.1 502.2,665.6" fill="#7a7876" stroke="#000" stroke-width="0.8" stroke-linejoin="round" />
<polygon points="512.1,675.4 536.6,667.4 535.4,663.6 510.9,671.6" fill="#a5a3a1" stroke="#000" stroke-width="0.7" stroke-linejoin="round" />
<polygon points="505.0,664.0 519.0,658.5 531.0,659.0 512.0,669.0" fill="#4a4846" stroke="#111" stroke-width="0.6" stroke-linejoin="round" />
<polygon points="482.4,665.6 552.0,718.6 555.2,714.4 485.6,661.4" fill="#8c8a88" stroke="#000" stroke-width="0.9" stroke-linejoin="round" />
<line x1="486.0" y1="661.6" x2="555.0" y2="714.4" stroke="#c8c6c4" stroke-width="1.0" />
<g transform="translate(532.5,678.5) rotate(-9)"><rect x="0" y="-2.3" width="10.5" height="4.6" rx="2" fill="#d0cecc" stroke="#333" stroke-width="0.7"/></g>
<polygon points="527.0,684.0 540.0,680.0 543.0,686.0 530.0,690.0" fill="#3a3836" stroke="#111" stroke-width="0.6" stroke-linejoin="round" />
<polygon points="553.0,670.0 558.6,668.5 559.2,722.0 553.6,720.5" fill="#6e6c6a" stroke="#000" stroke-width="0.8" stroke-linejoin="round" />
<line x1="556.0" y1="670.0" x2="556.5" y2="720.0" stroke="#b5b3b1" stroke-width="1" />
<polygon points="507.3,732.0 509.6,732.0 509.6,747.7 507.3,747.7" fill="#8a8886" stroke="#333" stroke-width="0.7" stroke-linejoin="round" />
<line x1="508.5" y1="732.0" x2="508.5" y2="747.7" stroke="#d0cecc" stroke-width="0.8" />
<polygon points="510.4,732.0 512.7,732.0 512.7,747.7 510.4,747.7" fill="#8a8886" stroke="#333" stroke-width="0.7" stroke-linejoin="round" />
<line x1="511.6" y1="732.0" x2="511.6" y2="747.7" stroke="#d0cecc" stroke-width="0.8" />
<polygon points="528.4,739.0 531.8,739.0 531.8,750.5 528.4,750.5" fill="#8a8886" stroke="#333" stroke-width="0.7" stroke-linejoin="round" />
<line x1="530.1" y1="739.0" x2="530.1" y2="750.5" stroke="#d0cecc" stroke-width="0.8" />
<polygon points="501.1,723.9 525.0,714.3 545.0,727.0 519.5,736.0" fill="#a8a6a4" stroke="#000" stroke-width="0.9" stroke-linejoin="round" />
<polygon points="501.1,723.9 519.5,736.0 520.0,740.0 501.4,727.5" fill="#6e6c6a" stroke="#000" stroke-width="0.6" stroke-linejoin="round" />
<ellipse cx="509.5" cy="722.0" rx="1.6" ry="1.9" fill="#777" stroke="#111" stroke-width="0.6"/>
<ellipse cx="512.5" cy="721.0" rx="1.6" ry="1.9" fill="#777" stroke="#111" stroke-width="0.6"/>
<ellipse cx="517.0" cy="727.0" rx="1.6" ry="1.9" fill="#777" stroke="#111" stroke-width="0.6"/>
<polygon points="518.5,733.0 557.0,718.0 558.5,725.5 521.0,741.0" fill="#8a8886" stroke="#000" stroke-width="0.9" stroke-linejoin="round" />
<line x1="520.0" y1="735.5" x2="557.5" y2="720.8" stroke="#d0cecc" stroke-width="1.0" />
<line x1="521.0" y1="739.3" x2="558.0" y2="724.3" stroke="#111" stroke-width="1.6" stroke-dasharray="1.1 1.2"/>
<polygon points="524.3,734.4 554.3,672.9 548.7,670.1 518.7,731.6" fill="#b0aeac" stroke="#111" stroke-width="0.9" stroke-linejoin="round" />
<line x1="520.2" y1="732.3" x2="550.2" y2="670.8" stroke="#222" stroke-width="1.3" stroke-dasharray="1.1 1.6"/>
<line x1="541.0" y1="702.0" x2="553.0" y2="712.0" stroke="#333" stroke-width="1" />
<polygon points="678.0,668.5 698.5,660.5 700.0,667.0 679.5,675.5" fill="#8a8886" stroke="#000" stroke-width="0.8" stroke-linejoin="round" />
<line x1="679.0" y1="670.5" x2="699.0" y2="662.5" stroke="#d0cecc" stroke-width="0.9" />
<line x1="680.0" y1="674.0" x2="699.5" y2="666.0" stroke="#111" stroke-width="1.4" stroke-dasharray="1.1 1.2"/>
<polygon points="666.4,631.0 696.9,664.5 701.1,660.5 670.6,627.0" fill="#b0aeac" stroke="#000" stroke-width="0.9" stroke-linejoin="round" />
<line x1="667.8" y1="634.5" x2="688.0" y2="661.0" stroke="#222" stroke-width="2.2" />
<polygon points="673.0,655.0 680.0,652.5 682.0,660.0 675.0,663.0" fill="#9a9896" stroke="#222" stroke-width="0.6" stroke-linejoin="round" />
<polygon points="662.3,690.7 684.8,707.2 687.2,703.8 664.7,687.3" fill="#8a8886" stroke="#000" stroke-width="0.8" stroke-linejoin="round" />
<polygon points="641.7,709.0 644.6,709.0 644.6,724.8 641.7,724.8" fill="#8a8886" stroke="#333" stroke-width="0.7" stroke-linejoin="round" />
<line x1="643.2" y1="709.0" x2="643.2" y2="724.8" stroke="#d0cecc" stroke-width="0.8" />
<polygon points="657.3,716.0 661.2,716.0 661.2,738.5 657.3,738.5" fill="#8a8886" stroke="#333" stroke-width="0.7" stroke-linejoin="round" />
<line x1="659.2" y1="716.0" x2="659.2" y2="738.5" stroke="#d0cecc" stroke-width="0.8" />
<polygon points="665.0,716.0 668.0,716.0 668.0,726.8 665.0,726.8" fill="#8a8886" stroke="#333" stroke-width="0.7" stroke-linejoin="round" />
<line x1="666.5" y1="716.0" x2="666.5" y2="726.8" stroke="#d0cecc" stroke-width="0.8" />
<polygon points="639.7,705.3 662.2,694.5 687.6,707.2 658.3,719.0" fill="#a8a6a4" stroke="#000" stroke-width="0.9" stroke-linejoin="round" />
<polygon points="639.7,705.3 658.3,719.0 658.6,722.0 640.0,708.2" fill="#6e6c6a" stroke="#000" stroke-width="0.6" stroke-linejoin="round" />
<polygon points="658.3,719.0 687.6,707.2 687.8,710.2 658.6,722.0" fill="#7a7876" stroke="#000" stroke-width="0.6" stroke-linejoin="round" />
<ellipse cx="665.0" cy="703.0" rx="1.6" ry="1.9" fill="#777" stroke="#111" stroke-width="0.6"/>
<ellipse cx="668.5" cy="706.0" rx="1.6" ry="1.9" fill="#777" stroke="#111" stroke-width="0.6"/>
<ellipse cx="659.0" cy="712.5" rx="1.6" ry="1.9" fill="#777" stroke="#111" stroke-width="0.6"/>
<polygon points="660.6,646.1 681.9,704.1 687.7,701.9 666.4,643.9" fill="#b0aeac" stroke="#111" stroke-width="0.9" stroke-linejoin="round" />
<line x1="662.1" y1="645.5" x2="683.4" y2="703.5" stroke="#222" stroke-width="1.3" stroke-dasharray="1.1 1.6"/>
<ellipse cx="685.5" cy="705" rx="2.6" ry="3" fill="#9a9896" stroke="#111" stroke-width="0.7"/>
<rect x="0" y="0" width="1138" height="1.4" fill="#9a9a9a"/>
<rect x="-2" y="0.7" width="85.5" height="21.3" fill="#d9d9d9" stroke="#8a8a8a" stroke-width="1"/>
<rect x="83.5" y="0.7" width="117" height="21.3" fill="#d9d9d9" stroke="#8a8a8a" stroke-width="1"/>
<text id="t1" x="-23" y="15.7" font-size="12" fill="#151515" textLength="72" lengthAdjust="spacingAndGlyphs">SOLIDWORKS</text>
<text id="t1b" x="52.3" y="15.9" font-size="11.7" fill="#151515">插件</text>
<text id="t2" x="92" y="15.7" font-size="12" fill="#151515" textLength="100.6" lengthAdjust="spacingAndGlyphs">SOLIDWORKS MBD</text>
<g><polygon points="22.7,830.5 11,819.5 9.5,823 6.3,817.3 12.8,816.6 13.3,818.2 24.5,828.5" fill="#a02020" stroke="#5a1010" stroke-width="0.5"/><polygon points="22,829 38.5,822.5 37.8,820 47.5,821.2 41.5,828.5 40.3,826.2 23.5,832.5" fill="#1a6a1a" stroke="#0c3c0c" stroke-width="0.5"/><polygon points="21.3,830.5 24.7,830.5 24.7,846 27.5,847.5 23.2,855.5 19,847.5 21.3,846" fill="#2020a8" stroke="#101060" stroke-width="0.5"/><text x="0.5" y="819" font-size="11" font-weight="bold" fill="#ff0000" class="ser" textLength="6" lengthAdjust="spacingAndGlyphs">X</text><text x="46.8" y="823" font-size="11" font-weight="bold" fill="#008000" class="ser" textLength="5.5" lengthAdjust="spacingAndGlyphs">Y</text><text x="19.8" y="864" font-size="11" font-weight="bold" fill="#0000ff" class="ser" textLength="5.5" lengthAdjust="spacingAndGlyphs">Z</text></g>
<defs>
<radialGradient id="lens" cx="0.4" cy="0.35" r="0.7"><stop offset="0" stop-color="#f4f9fd"/><stop offset="1" stop-color="#a9c6e0"/></radialGradient>
<linearGradient id="hnd" x1="0" y1="0" x2="1" y2="1"><stop offset="0" stop-color="#7fb4d6"/><stop offset="1" stop-color="#3f86b4"/></linearGradient>
<linearGradient id="cubeb" x1="0" y1="0" x2="1" y2="1"><stop offset="0" stop-color="#8fc3e0"/><stop offset="1" stop-color="#3d88b8"/></linearGradient>
<linearGradient id="mon" x1="0" y1="0" x2="1" y2="1"><stop offset="0" stop-color="#dfe6ec"/><stop offset="1" stop-color="#b9c4cf"/></linearGradient>
</defs>
<g><line x1="662" y1="23.5" x2="668.5" y2="17" stroke="#3f86b4" stroke-width="3" stroke-linecap="round"/><line x1="662" y1="23.5" x2="668.5" y2="17" stroke="#8cc0dd" stroke-width="1.2" stroke-linecap="round"/><circle cx="671.5" cy="13.5" r="5.9" fill="url(#lens)" stroke="#6a7885" stroke-width="1.1"/><path d="M671.5 9.2l1.6 1.9h-3.2zM671.5 17.8l1.6 -1.9h-3.2zM667.2 13.5l1.9 -1.6v3.2zM675.8 13.5l-1.9 -1.6v3.2z" fill="#444"/></g>
<g><rect x="691.3" y="6.9" width="12.6" height="13.2" fill="none" stroke="#333" stroke-width="1.1" stroke-dasharray="2.6 1.6"/><line x1="686.6" y1="24" x2="691.5" y2="19" stroke="#3f86b4" stroke-width="3" stroke-linecap="round"/><line x1="686.6" y1="24" x2="691.5" y2="19" stroke="#8cc0dd" stroke-width="1.2" stroke-linecap="round"/><circle cx="695.2" cy="14.6" r="6.4" fill="url(#lens)" stroke="#7d8a96" stroke-width="1.1"/></g>
<g><polygon points="712.5,19 716,14.500 727.500,7 730.500,10.500 721,20 717.500,24.500" fill="#d9dde0" stroke="#5a6268" stroke-width="0.9"/><ellipse cx="715" cy="21.600" rx="2.500" ry="3.600" transform="rotate(-38 715 21.600)" fill="#f2f4f5" stroke="#5a6268" stroke-width="0.8"/><line x1="720.500" y1="11.600" x2="724.500" y2="16.500" stroke="#7a8288" stroke-width="0.8"/><line x1="724.500" y1="9" x2="728" y2="13" stroke="#7a8288" stroke-width="0.8"/><polygon points="720.500,20.600 725.200,17 725.200,19.300 731,19.300 731,22 725.200,22 725.200,24.300" fill="#2f7fb0"/></g>
<g><path d="M738.5 12.5q9 -7 18 -1v10q-2 3 -5 3v-9q-3.5 -2.5 -8 0v9q-3 0 -5 -2z" fill="#dfe3e6" stroke="#6a7278" stroke-width="0.9"/><path d="M738.5 12.8l5 2.5v9l-5 -2z" fill="#3d88b8" stroke="#2a5f85" stroke-width="0.7"/><path d="M751.5 15.3l5 -3v9.5l-5 2.5z" fill="#3d88b8" stroke="#2a5f85" stroke-width="0.7"/><path d="M739.5 18l3 -3M739.5 21.5l3.5 -3.5M752.5 19l3 -3M752.5 22.5l3.5 -3.5" stroke="#bfe0f2" stroke-width="0.8"/><path d="M743.5 15.5q4 -2.5 8 0v8h-8z" fill="#eef1f3" stroke="#8a9298" stroke-width="0.6"/></g>
<g><path d="M764.5 12.5l5.5 -5.5h12v12.5l-5.5 5.5" fill="#f4f6f8" stroke="#5a646c" stroke-width="0.9"/><path d="M770 7v12.5h12M770 19.5l-5.500 5.5" fill="none" stroke="#5a646c" stroke-width="0.7"/><rect x="764.5" y="12.5" width="12" height="12.5" fill="url(#cubeb)" stroke="#2a5f85" stroke-width="0.9"/><path d="M773 8v3.800M771.800 10.300l1.200 1.600l1.200 -1.600M781 16h-3.500M779.300 14.800l-1.800 1.200l1.800 1.200" stroke="#333" stroke-width="0.8" fill="none"/></g>
<polygon points="789.4,15.0 794.6,15.0 792.0,18.0" fill="#8a8f96"/>
<g><path d="M805.5 10l8.500 -3l8 2.500v12l-8 3.500l-8.500 -3.500z" fill="#f2f5f7" stroke="#5a646c" stroke-width="0.9"/><path d="M805.500 10l6 2.500v12.500l-6 -3.500z" fill="url(#cubeb)" stroke="#2a5f85" stroke-width="0.7"/><path d="M811.500 12.500l2.500 -0.800v12.800l-2.500 0.500z" fill="#9fcbe3" stroke="#2a5f85" stroke-width="0.5"/><path d="M814 11.700l8 -2.200v12l-8 3z" fill="#eef1f4" stroke="#7a848c" stroke-width="0.6"/><path d="M805.500 10l8.500 -3l8 2.500l-8 2.200l-2.500 0.800z" fill="#d4e6f1" stroke="#5a646c" stroke-width="0.6"/></g>
<polygon points="829.4,15.0 834.6,15.0 832.0,18.0" fill="#8a8f96"/>
<g><path d="M844.500 16q8.500 -9.500 17.500 0q-9 8.500 -17.500 0z" fill="#dde1e4" stroke="#8a9298" stroke-width="0.9"/><circle cx="853.500" cy="15.800" r="4.300" fill="#7a838b" stroke="#4a5258" stroke-width="0.8"/><circle cx="853.500" cy="15.800" r="2" fill="#2a2e32"/><line x1="853.500" y1="9" x2="853.500" y2="23.500" stroke="#3a3e42" stroke-width="0.9"/></g>
<polygon points="869.4,15.0 874.6,15.0 872.0,18.0" fill="#8a8f96"/>
<g><circle cx="892.0" cy="14.0" r="7.6" fill="#3b78c4"/><path d="M892.0 6.4A7.6 7.6 0 0 1 899.2 16.3L892.0 14.0z" fill="#d63a32"/><path d="M899.2 16.3A7.6 7.6 0 0 1 893.5 21.4L892.0 14.0z" fill="#e8c637"/><path d="M893.5 21.4A7.6 7.6 0 0 1 884.6 15.9L892.0 14.0z" fill="#3fa648"/><circle cx="892.0" cy="14.0" r="7.6" fill="none" stroke="#5a6a7a" stroke-width="0.6"/><ellipse cx="890.1" cy="10.6" rx="3.8" ry="2.3" fill="#fff" opacity="0.35"/></g>
<g><polygon points="891,24.500 892.500,20.500 900.500,12.500 903,15 895,23" fill="#f0cf4a" stroke="#5a4a1a" stroke-width="0.8"/><polygon points="891,24.500 892.500,20.500 895,23" fill="#f4e4c0" stroke="#5a4a1a" stroke-width="0.6"/><polygon points="899,14 900.500,12.500 903,15 901.500,16.500" fill="#d04040" stroke="#5a1a1a" stroke-width="0.6"/></g>
<g><rect x="909" y="14" width="19" height="11.500" fill="#f4f4f4" stroke="#2a2a2a" stroke-width="0.8"/><path d="M909 14h3.800v3.800h-3.800zM916.600 14h3.800v3.800h-3.800zM924.200 14h3.800v3.800h-3.800zM912.800 17.800h3.800v3.800h-3.800zM920.400 17.800h3.800v3.800h-3.800zM909 21.600h3.800v3.900h-3.800zM916.600 21.600h3.800v3.900h-3.800zM924.200 21.600h3.800v3.900h-3.800z" fill="#2a2a2a"/></g>
<g><circle cx="918.5" cy="13.5" r="7.4" fill="#3b78c4"/><path d="M918.5 6.1A7.4 7.4 0 0 1 925.5 15.7L918.5 13.5z" fill="#d63a32"/><path d="M925.5 15.7A7.4 7.4 0 0 1 920.0 20.8L918.5 13.5z" fill="#e8c637"/><path d="M920.0 20.8A7.4 7.4 0 0 1 911.3 15.3L918.5 13.5z" fill="#3fa648"/><circle cx="918.5" cy="13.5" r="7.4" fill="none" stroke="#5a6a7a" stroke-width="0.6"/><ellipse cx="916.6" cy="10.2" rx="3.7" ry="2.2" fill="#fff" opacity="0.35"/></g>
<polygon points="935.4,15.0 940.6,15.0 938.0,18.0" fill="#8a8f96"/>
<g><rect x="950.500" y="8.500" width="17" height="11.500" fill="url(#mon)" stroke="#4a525a" stroke-width="1.1"/><rect x="957.800" y="20" width="2.400" height="2.500" fill="#3a4248"/><rect x="955" y="22.300" width="8" height="1.500" fill="#2a3238"/></g>
<polygon points="975.4,15.0 980.6,15.0 978.0,18.0" fill="#8a8f96"/>
</svg>
</body></html>
